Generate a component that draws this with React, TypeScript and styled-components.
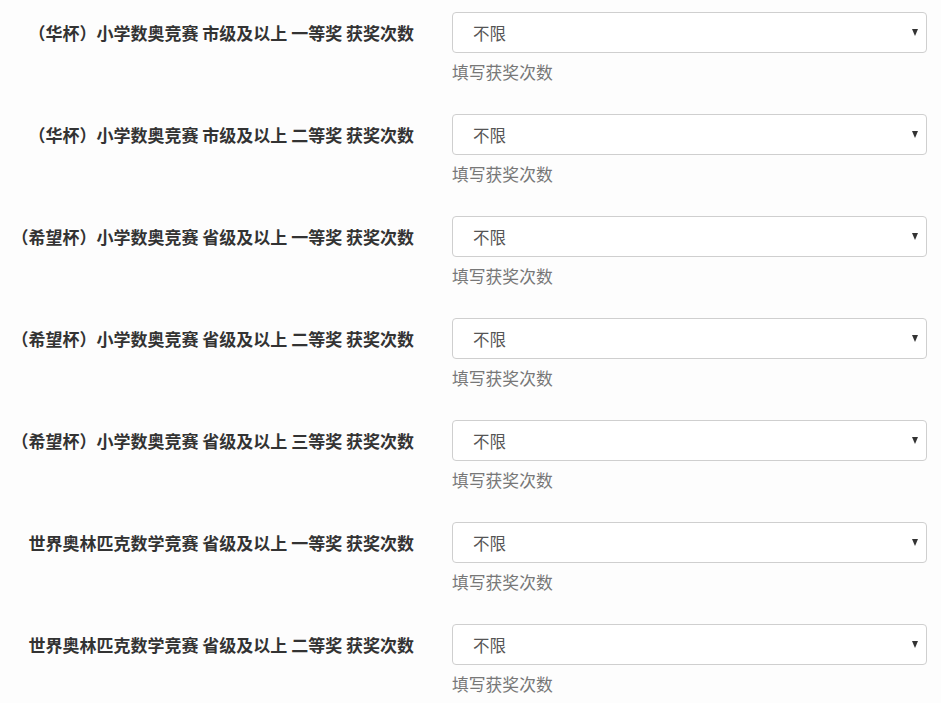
import React from "react";
import styled, { createGlobalStyle } from "styled-components";

const GlobalStyle = createGlobalStyle`
  html, body {
    margin: 0;
    padding: 0;
    background: #fdfdfd;
  }
  body {
    font-family: "Noto Sans CJK SC", "Noto Sans", sans-serif;
  }
`;

interface AwardField {
  label: string;
}

const fields: AwardField[] = [
  { label: "（华杯）小学数奥竞赛 市级及以上 一等奖 获奖次数" },
  { label: "（华杯）小学数奥竞赛 市级及以上 二等奖 获奖次数" },
  { label: "（希望杯）小学数奥竞赛 省级及以上 一等奖 获奖次数" },
  { label: "（希望杯）小学数奥竞赛 省级及以上 二等奖 获奖次数" },
  { label: "（希望杯）小学数奥竞赛 省级及以上 三等奖 获奖次数" },
  { label: "世界奥林匹克数学竞赛 省级及以上 一等奖 获奖次数" },
  { label: "世界奥林匹克数学竞赛 省级及以上 二等奖 获奖次数" },
];

const App = () => {
  return (
    <>
      <GlobalStyle />
      <Form>
        {fields.map((field, i) => (
          <FormRow key={i}>
            <Label>{field.label}</Label>
            <Control>
              <SelectBox>
                <SelectValue>不限</SelectValue>
                <Caret />
              </SelectBox>
              <HelpText>填写获奖次数</HelpText>
            </Control>
          </FormRow>
        ))}
      </Form>
    </>
  );
};

export default App;

const Form = styled.div`
  padding-top: 12px;
  display: flex;
  flex-direction: column;
`;

const FormRow = styled.div`
  display: grid;
  grid-template-columns: 414px 475px;
  column-gap: 38px;
  height: 102px;
  align-items: start;
`;

const Label = styled.label`
  text-align: right;
  font-size: 17px;
  font-weight: bold;
  line-height: 41px;
  color: #333;
  white-space: nowrap;
`;

const Control = styled.div`
  display: flex;
  flex-direction: column;
`;

const SelectBox = styled.div`
  position: relative;
  height: 41px;
  box-sizing: border-box;
  border: 1px solid #cfcfcf;
  border-radius: 4px;
  background: #fff;
  display: flex;
  align-items: center;
  padding: 0 20px;
`;

const SelectValue = styled.span`
  font-size: 16.5px;
  color: #555;
  flex: 1;
`;

const Caret = styled.span`
  width: 0;
  height: 0;
  border-left: 3.5px solid transparent;
  border-right: 3.5px solid transparent;
  border-top: 7px solid #333;
  margin-right: -12px;
`;

const HelpText = styled.div`
  margin-top: 9px;
  font-size: 16.8px;
  line-height: 20px;
  color: #777;
`;
